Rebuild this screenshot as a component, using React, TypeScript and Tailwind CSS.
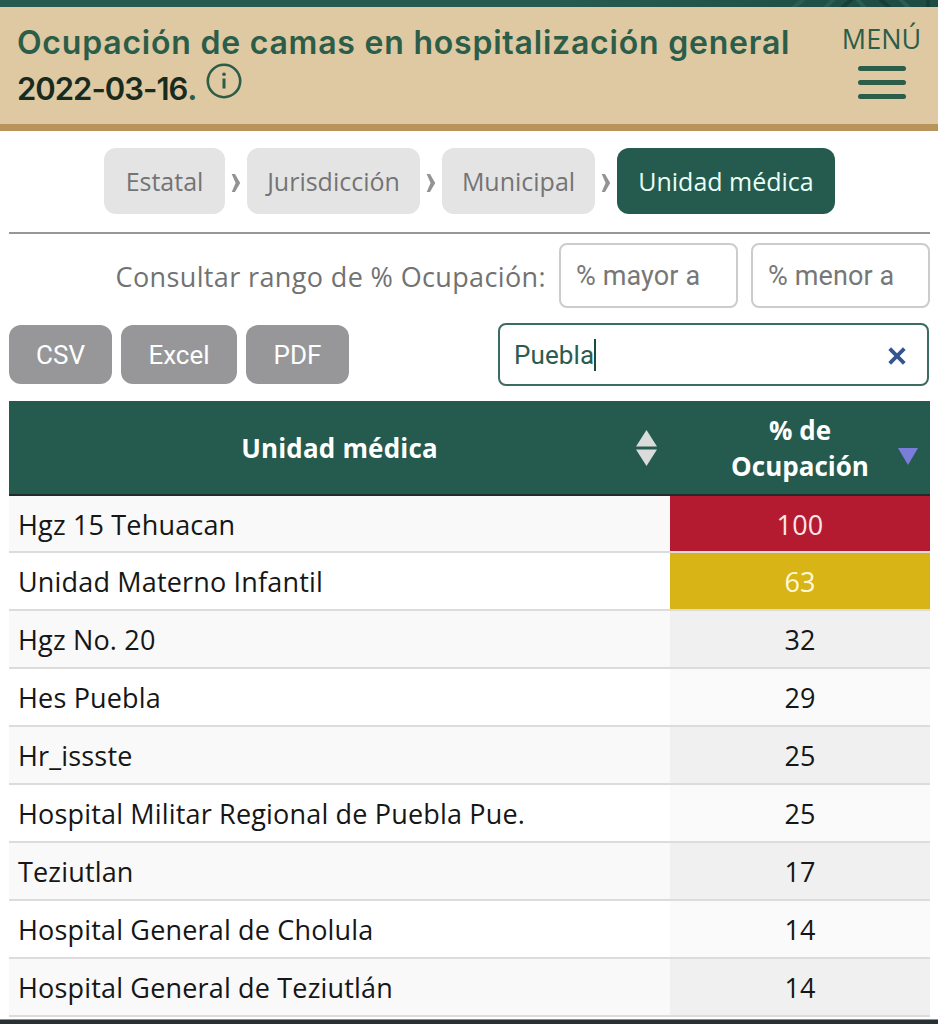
import React from 'react';

const steps = [
  { label: 'Estatal', box: 'w-[121px]', active: false },
  { label: 'Jurisdicción', box: 'w-[173px]', active: false },
  { label: 'Municipal', box: 'w-[153px]', active: false },
  { label: 'Unidad médica', box: 'w-[218px]', active: true },
];

const rows = [
  { name: 'Hgz 15 Tehuacan', value: 100, tone: 'bg-[#b51b30] text-[#fae6e8]' },
  { name: 'Unidad Materno Infantil', value: 63, tone: 'bg-[#d8b416] text-[#fff9d8]' },
  { name: 'Hgz No. 20', value: 32, tone: '' },
  { name: 'Hes Puebla', value: 29, tone: '' },
  { name: 'Hr_issste', value: 25, tone: '' },
  { name: 'Hospital Militar Regional de Puebla Pue.', value: 25, tone: '' },
  { name: 'Teziutlan', value: 17, tone: '' },
  { name: 'Hospital General de Cholula', value: 14, tone: '' },
  { name: 'Hospital General de Teziutlán', value: 14, tone: '' },
];

function Header() {
  return (
    <header>
      <div className="h-[7px] overflow-hidden bg-linear-to-r from-[#265b50] from-60% to-[#1d4b42]">
        <svg className="ml-auto block" width="170" height="7" viewBox="0 0 170 7" fill="none" strokeWidth="4">
          <path d="M25 8 36-1M57 8 66-1M89-1l8 9M132-1l9 9" stroke="#2b5d52" />
          <path d="M74 8 84-1M112-1l10 9M160-1v9" stroke="#173e37" />
        </svg>
      </div>
      <div className="flex h-[124px] justify-between border-b-[7px] border-[#b9935c] bg-[#dec9a2] pr-[17px] pl-[17px] text-[#2b5d49]">
        <h1 className="pt-[13px] font-['Inter',sans-serif] text-[32px] leading-[46px] font-semibold">
          <span className="block whitespace-nowrap tracking-[0.78px]">Ocupación de camas en hospitalización general</span>
          <span className="flex">
            <span className="text-[31px] tracking-[-1px] text-[#182b1e]">2022-03-16</span>.
            <svg className="-mt-[4px] ml-[7px]" width="38" height="38" viewBox="0 0 38 38" fill="none" stroke="currentColor">
              <circle cx="19" cy="19" r="16.2" strokeWidth="2.6" />
              <path d="M19 16.5v10" strokeWidth="3" />
              <circle cx="19" cy="12.3" r="1.8" fill="currentColor" stroke="none" />
            </svg>
          </span>
        </h1>
        <button className="flex w-[79px] flex-col items-center pt-[13px] font-['Open_Sans',sans-serif]">
          <span className="text-[27px] leading-[38px] font-normal">MENÚ</span>
          <span className="mt-[8px] flex flex-col gap-[9px]">
            <span className="h-[5px] w-[48px] rounded-full bg-[#2b5d49]" />
            <span className="h-[5px] w-[48px] rounded-full bg-[#2b5d49]" />
            <span className="h-[5px] w-[48px] rounded-full bg-[#2b5d49]" />
          </span>
        </button>
      </div>
    </header>
  );
}

function Breadcrumb() {
  return (
    <nav className="mt-[17px] flex h-[66px] justify-center text-[25px]">
      {steps.map((s, i) => (
        <React.Fragment key={s.label}>
          {i > 0 && (
            <span className="flex w-[22px] items-center justify-center pt-[4px]">
              <svg width="10" height="18" viewBox="0 0 10 18" fill="#939393">
                <path d="M.7 0h3.3l5.2 9-5.2 9H.7l3.9-9z" />
              </svg>
            </span>
          )}
          <span
            className={`${s.box} flex items-center justify-center rounded-[12px] pt-px whitespace-nowrap ${
              s.active ? 'bg-[#245b4e] text-[#e9fff8]' : 'bg-[#e4e4e4] text-[#747474]'
            }`}
          >
            {s.label}
          </span>
        </React.Fragment>
      ))}
    </nav>
  );
}

function Filters() {
  return (
    <div className="mt-[9px] flex h-[65px] font-['Roboto',sans-serif] text-[27px] tracking-[0.12px] text-[#777]">
      <label className="mr-[13px] flex flex-1 items-center justify-end pt-[3px] font-['Open_Sans',sans-serif] text-[27px] tracking-[0.37px] whitespace-nowrap text-[#727272]">
        Consultar rango de % Ocupación:
      </label>
      <div className="flex w-[179px] items-center rounded-[8px] border-2 border-[#ccc] pt-[2px] pl-[15px]">% mayor a</div>
      <div className="ml-[13px] flex w-[179px] items-center rounded-[8px] border-2 border-[#ccc] pt-[2px] pl-[15px]">% menor a</div>
    </div>
  );
}

function Toolbar() {
  return (
    <div className="mt-[15px] flex h-[64px] items-start font-['Roboto',sans-serif] text-[26px]">
      <div className="flex gap-[9px] pt-[2px] text-white">
        <button className="h-[59px] w-[103px] rounded-[12px] bg-[#979799] pt-px">CSV</button>
        <button className="h-[59px] w-[116px] rounded-[12px] bg-[#979799] pt-px">Excel</button>
        <button className="h-[59px] w-[103px] rounded-[12px] bg-[#979799] pt-px">PDF</button>
      </div>
      <div className="mr-px ml-auto flex h-[63px] w-[431px] items-center rounded-[8px] border-2 border-[#3c6b61] pr-[21px] pl-[14px] text-[#2c5c50]">
        <span className="pt-px tracking-[0.1px]">Puebla</span>
        <span className="h-[32px] w-[2px] bg-[#1c4b40]" />
        <svg className="mt-[3px] ml-auto" width="18" height="18" viewBox="0 0 18 18" stroke="#36558e" strokeWidth="3.8">
          <path d="M1.7 1.7l14.6 14.6M16.3 1.7L1.7 16.3" />
        </svg>
      </div>
    </div>
  );
}

function Table() {
  return (
    <div className="mt-[14px] text-[27px] tracking-[0.17px]">
      <div className="flex h-[95px] border-b-2 border-[#222b27] bg-[#245b4e] text-[26px] font-bold text-white">
        <div className="flex w-[661px] items-center pr-[13px]">
          <span className="flex-1 pt-[2px] pl-[34px] text-center">Unidad médica</span>
          <svg width="21" height="36" viewBox="0 0 21 36" fill="#d9dcda">
            <path d="M10.5 0 21 16.5H0zM0 19.5h21L10.5 36z" />
          </svg>
        </div>
        <div className="flex flex-1 items-center pr-[12px]">
          <span className="flex-1 pl-[32px] text-center leading-[36px] tracking-normal">
            % de
            <br />
            Ocupación
          </span>
          <svg className="mt-[18px]" width="20" height="17" viewBox="0 0 20 17" fill="#7b7ddb">
            <path d="M0 0h20L10 17z" />
          </svg>
        </div>
      </div>
      {rows.map((r, i) => (
        <div
          key={r.name}
          className={`flex border-b-2 border-[#dcdcdc] text-[#161616] ${i === 0 ? 'h-[57px]' : 'h-[58px]'} ${
            i % 2 ? 'bg-white' : 'bg-[#f9f9f9]'
          }`}
        >
          <div className="flex w-[661px] items-center pt-[3px] pl-[9px] whitespace-nowrap">{r.name}</div>
          <div
            className={`flex flex-1 items-center justify-center pt-[3px] ${r.tone || (i % 2 ? 'bg-[#fafafa]' : 'bg-[#f0f0f0]')}`}
          >
            {r.value}
          </div>
        </div>
      ))}
    </div>
  );
}

export default function App() {
  return (
    <div className="flex h-[1024px] w-[938px] flex-col overflow-hidden bg-white font-['Open_Sans',sans-serif]">
      <Header />
      <main className="min-h-0 flex-1 overflow-hidden pr-[8px] pl-[9px]">
        <Breadcrumb />
        <div className="mt-[18px] h-[2px] bg-[#979797]" />
        <Filters />
        <Toolbar />
        <Table />
      </main>
      <div className="h-[5px] shrink-0 border-t border-[#8d9093] bg-[#293034]" />
    </div>
  );
}
